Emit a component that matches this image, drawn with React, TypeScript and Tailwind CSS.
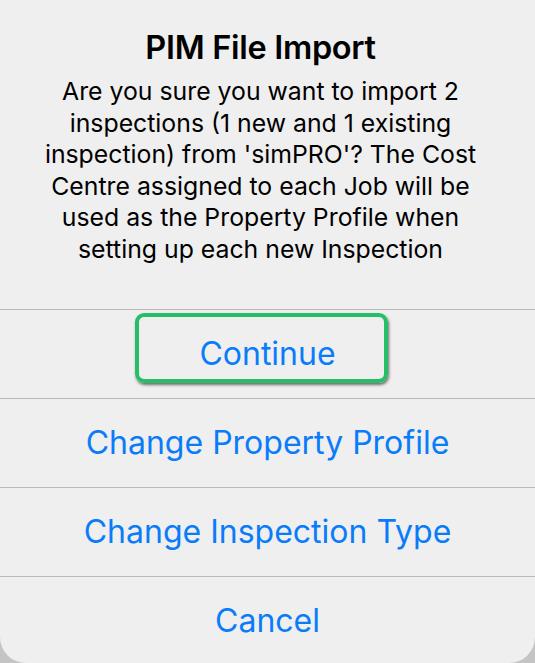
import React from "react";

const font = { fontFamily: "Inter, 'Noto Sans', 'Liberation Sans', sans-serif" };

function Row({ label, children }: { label: string; children?: React.ReactNode }) {
  return (
    <div className="relative flex h-[89px] shrink-0 items-center justify-center border-t border-[#b9b9b9]">
      {children}
      <span className="text-[32px] leading-none text-[#0a7cfa]">{label}</span>
    </div>
  );
}

export default function App() {
  return (
    <div className="h-[663px] w-[535px] overflow-hidden bg-[#c4c4c4]" style={font}>
      <div className="flex h-[663px] w-full flex-col rounded-b-[26px] bg-[#efefef]">
        <div className="flex h-[309px] shrink-0 flex-col items-center pr-[14px] pt-[30px] text-center text-black">
          <h1 className="text-[32.5px] font-semibold leading-[36px] tracking-[-0.3px]">PIM File Import</h1>
          <p className="mt-[10px] text-[24.8px] leading-[31.6px]">
            Are you sure you want to import 2<br />
            inspections (1 new and 1 existing<br />
            inspection) from 'simPRO'? The Cost<br />
            Centre assigned to each Job will be<br />
            used as the Property Profile when<br />
            setting up each new Inspection
          </p>
        </div>
        <Row label="Continue">
          <div className="absolute left-[135px] top-[3px] h-[70px] w-[253px] rounded-[9px] border-[4px] border-[#26bf67] shadow-[1px_2px_3px_rgba(0,0,0,0.55)]" />
        </Row>
        <Row label="Change Property Profile" />
        <Row label="Change Inspection Type" />
        <Row label="Cancel" />
      </div>
    </div>
  );
}
